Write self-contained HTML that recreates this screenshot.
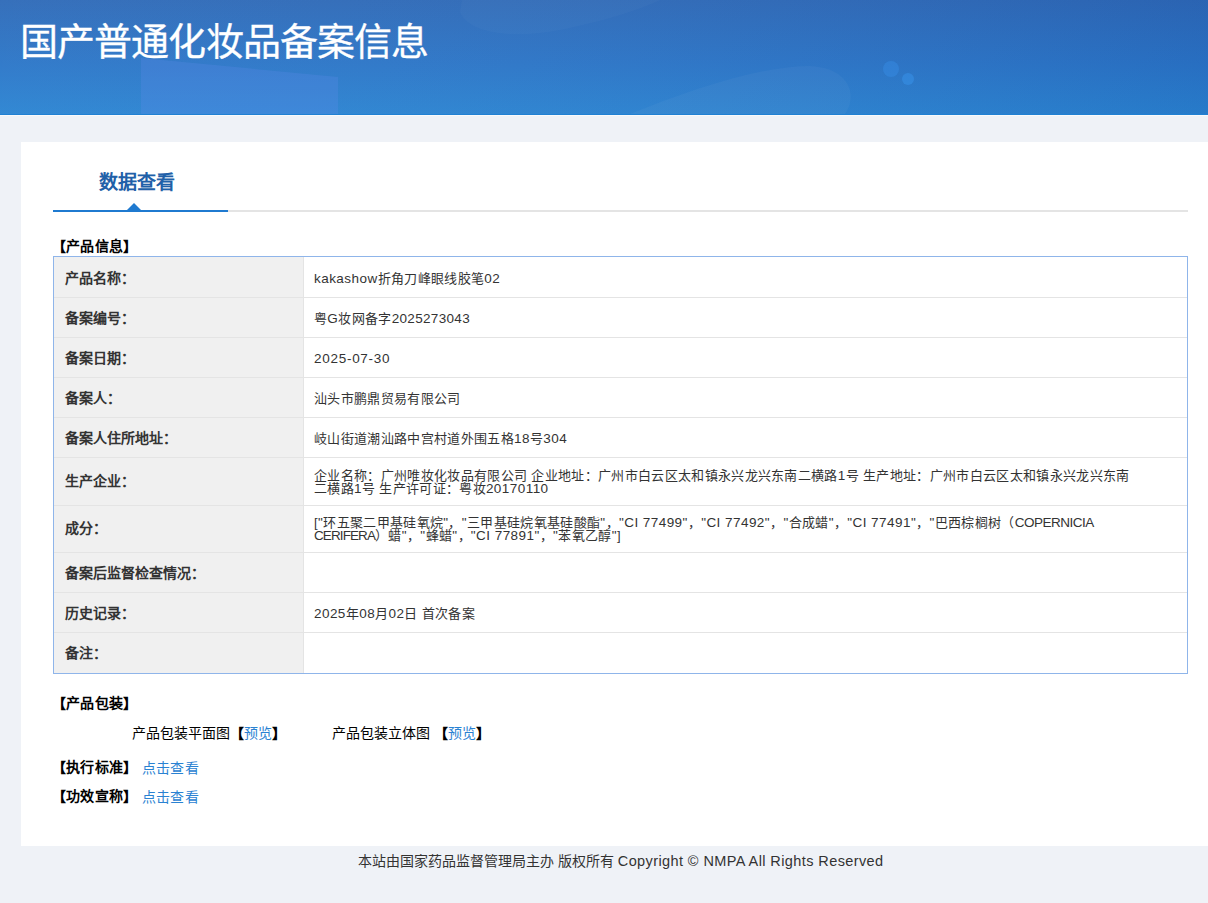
<!DOCTYPE html>
<html lang="zh-CN"><head><meta charset="utf-8">
<style>
*{margin:0;padding:0;box-sizing:border-box}
html,body{width:1208px;height:903px;overflow:hidden;background:#eff2f7;font-family:"Liberation Sans",sans-serif;color:#333}
#hdr{position:absolute;left:0;top:0;width:1208px;height:115px;background:linear-gradient(180deg,#2e6ab8 0%,#2b76c8 55%,#2a84d2 100%);overflow:hidden}
#hdr svg{position:absolute;left:0;top:0}
#hdr h1{position:absolute;left:20px;top:17px;font-size:38px;letter-spacing:-0.9px;-webkit-text-stroke:0.3px #fff;font-weight:normal;color:#fff;line-height:50px;white-space:nowrap}
#panel{position:absolute;left:21px;top:142px;width:1187px;height:704px;background:#fff}
.tab{position:absolute;left:78px;top:29px;font-size:19px;font-weight:bold;color:#2160a8;line-height:24px;white-space:nowrap}
.tabline{position:absolute;left:32px;top:68px;width:1135px;height:2px;background:#e4e4e4}
.tabline b{position:absolute;left:0;top:0;width:175px;height:2px;background:#1f7ad0}
.tri{position:absolute;left:106px;top:61px;width:0;height:0;border-left:7px solid transparent;border-right:7px solid transparent;border-bottom:7px solid #1f7ad0}
.sec{position:absolute;font-size:14px;font-weight:bold;color:#000;line-height:16px;white-space:nowrap;letter-spacing:0.35px;margin-left:-1.5px}
#tbl{position:absolute;left:32px;top:114px;width:1135px;height:418px;border:1px solid #8fb5ea;background:#fff}
#tbl .lc{position:absolute;left:0;top:0;width:250px;height:416px;background:#f0f0f0;border-right:1px solid #e4e4e4}
#tbl .hl{position:absolute;left:0;width:1133px;height:1px;background:#e4e4e4}
.lb{position:absolute;left:10.5px;font-size:14px;font-weight:bold;color:#333;line-height:16px;white-space:nowrap}
.lb i{font-style:normal;position:relative;left:0.5px}
.vl{position:absolute;left:260px;font-size:13px;letter-spacing:0.33px;color:#333;line-height:12.5px;white-space:nowrap}
.e{font-size:13.5px;letter-spacing:0.45px}
.u{font-size:13.5px;letter-spacing:-0.9px}
.link{color:#2a82d2}
#foot{position:absolute;left:358px;top:852px;font-size:14px;color:#333;line-height:18px;white-space:nowrap}
</style></head><body>
<div style="position:absolute;left:0;top:115px;width:1208px;height:1px;background:#f8f9fb"></div>
<div id="hdr">
<svg width="1208" height="115" viewBox="0 0 1208 115">
 <defs>
  <linearGradient id="gx" x1="0" y1="0" x2="1" y2="0">
   <stop offset="0" stop-color="#ffffff" stop-opacity="0.04"/>
   <stop offset="1" stop-color="#0a2a80" stop-opacity="0.10"/>
  </linearGradient>
 </defs>
 <rect x="0" y="0" width="1208" height="114" fill="url(#gx)"/>
 <path d="M141 58 L338 77 L338 114 L141 114 Z" fill="#6a8cf0" fill-opacity="0.22"/>
 <path d="M460 12 C470 36 520 38 560 30 C600 22 640 10 660 0 L462 0 Z" fill="#ffffff" fill-opacity="0.025"/>
 <path d="M630 114 C690 90 760 66 810 66 C850 68 858 96 845 114 Z" fill="#ffffff" fill-opacity="0.035"/>
 <rect x="0" y="114" width="1208" height="1" fill="#1a7fd4" fill-opacity="0.6"/>
 <circle cx="891" cy="69" r="8" fill="#3a96f0" fill-opacity="0.35"/>
 <circle cx="908" cy="79" r="6" fill="#3a96f0" fill-opacity="0.45"/>
</svg>
<h1>国产普通化妆品备案信息</h1></div>
<div id="panel">
 <div class="tab">数据查看</div>
 <div class="tabline"><b></b></div>
 <div class="tri"></div>
 <div class="sec" style="left:32px;top:96px">【产品信息】</div>
 <div id="tbl">
  <div class="lc"></div>
  <div class="hl" style="top:40px"></div>
  <div class="hl" style="top:80px"></div>
  <div class="hl" style="top:120px"></div>
  <div class="hl" style="top:160px"></div>
  <div class="hl" style="top:200px"></div>
  <div class="hl" style="top:248px"></div>
  <div class="hl" style="top:295px"></div>
  <div class="hl" style="top:335px"></div>
  <div class="hl" style="top:375px"></div>
  <div class="lb" style="top:13px">产品名称<i>：</i></div>
  <div class="vl" style="top:16px"><span class="e">kakashow</span>折角刀峰眼线胶笔<span class="e">02</span></div>
  <div class="lb" style="top:53px">备案编号<i>：</i></div>
  <div class="vl" style="top:56px">粤<span class="e">G</span>妆网备字<span class="e" style="letter-spacing:0.33px">2025273043</span></div>
  <div class="lb" style="top:93px">备案日期<i>：</i></div>
  <div class="vl" style="top:96px"><span class="e" style="letter-spacing:0.72px">2025-07-30</span></div>
  <div class="lb" style="top:133px">备案人<i>：</i></div>
  <div class="vl" style="top:136px">汕头市鹏鼎贸易有限公司</div>
  <div class="lb" style="top:173px">备案人住所地址<i>：</i></div>
  <div class="vl" style="top:176px">岐山街道潮汕路中宫村道外围五格<span class="e">18</span>号<span class="e">304</span></div>
  <div class="lb" style="top:216px">生产企业<i>：</i></div>
  <div class="vl" style="top:213px">企业名称：广州唯妆化妆品有限公司 企业地址：广州市白云区太和镇永兴龙兴东南二横路<span class="e">1</span>号 生产地址：广州市白云区太和镇永兴龙兴东南<br>二横路<span class="e">1</span>号 生产许可证：粤妆<span class="e">20170110</span></div>
  <div class="lb" style="top:263px">成分<i>：</i></div>
  <div class="vl" style="top:260px">[<span class="e">"</span>环五聚二甲基硅氧烷<span class="e">"</span>，<span class="e">"</span>三甲基硅烷氧基硅酸酯<span class="e">"</span>，<span class="e">"CI 77499"</span>，<span class="e">"CI 77492"</span>，<span class="e">"</span>合成蜡<span class="e">"</span>，<span class="e">"CI 77491"</span>，<span class="e">"</span>巴西棕榈树（<span class="u" style="letter-spacing:-0.5px">COPERNICIA</span><br><span class="u">CERIFERA</span>）蜡<span class="e">"</span>，<span class="e">"</span>蜂蜡<span class="e">"</span>，<span class="e">"CI 77891"</span>，<span class="e">"</span>苯氧乙醇<span class="e">"</span>]</div>
  <div class="lb" style="top:308px">备案后监督检查情况<i>：</i></div>
  <div class="lb" style="top:348px">历史记录<i>：</i></div>
  <div class="vl" style="top:351px"><span class="e">2025</span>年<span class="e">08</span>月<span class="e">02</span>日 首次备案</div>
  <div class="lb" style="top:388px">备注<i>：</i></div>
 </div>
 <div class="sec" style="left:32px;top:553px">【产品包装】</div>
 <div style="position:absolute;left:111px;top:582px;font-size:14px;line-height:18px;color:#000;white-space:nowrap">产品包装平面图<b>【</b><span class="link">预览</span><b>】</b></div>
 <div style="position:absolute;left:311px;top:582px;font-size:14px;line-height:18px;color:#000;white-space:nowrap">产品包装立体图 <b>【</b><span class="link">预览</span><b>】</b></div>
 <div class="sec" style="left:32px;top:617px">【执行标准】</div>
 <div style="position:absolute;left:120.5px;top:617px;font-size:14px;line-height:18px;letter-spacing:0.35px;white-space:nowrap" class="link">点击查看</div>
 <div class="sec" style="left:32px;top:646px">【功效宣称】</div>
 <div style="position:absolute;left:120.5px;top:646px;font-size:14px;line-height:18px;letter-spacing:0.35px;white-space:nowrap" class="link">点击查看</div>
</div>
<div id="foot">本站由国家药品监督管理局主办 版权所有 <span style="letter-spacing:0.4px;font-size:14.5px">Copyright © NMPA All Rights Reserved</span></div>
</body></html>
